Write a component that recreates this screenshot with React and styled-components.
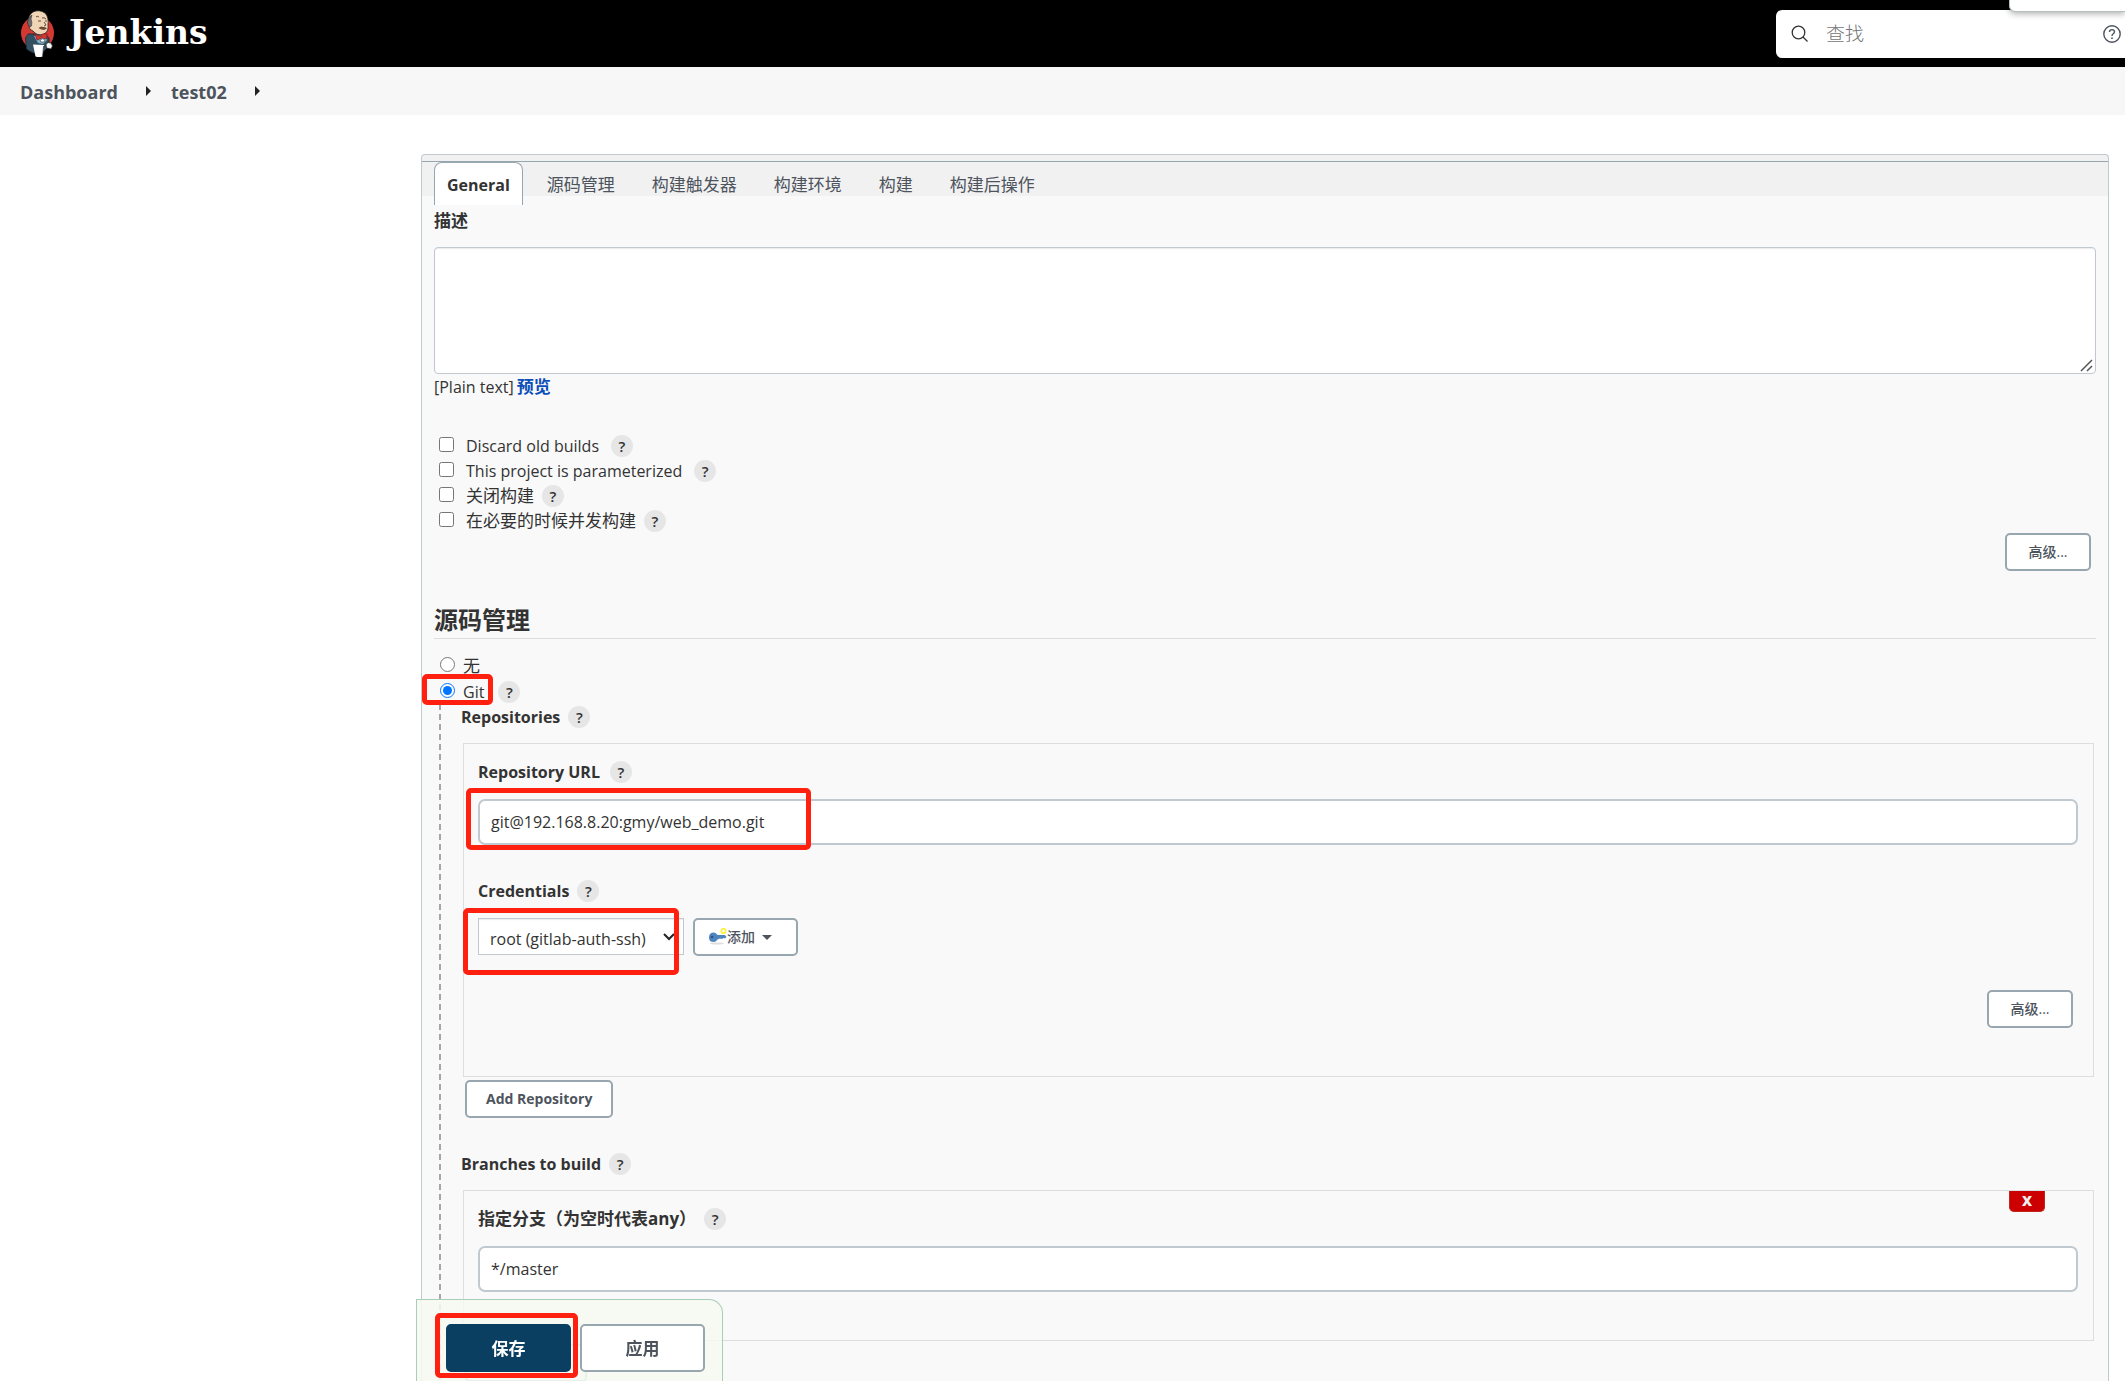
import React from "react";
import styled, { createGlobalStyle, css } from "styled-components";

const GlobalStyle = createGlobalStyle`
  *, *::before, *::after { box-sizing: border-box; }
  body {
    margin: 0;
    background: #fff;
    color: #333;
    font-family: "Open Sans", "Noto Sans CJK SC", sans-serif;
    font-size: 16px;
    line-height: 24px;
  }
  button, input, select, textarea { font: inherit; color: inherit; margin: 0; }
  a { color: inherit; text-decoration: none; }
`;

const Page = styled.div`
  display: flex;
  flex-direction: column;
  height: 100vh;
  overflow: hidden;
`;

const Header = styled.header`
  position: relative;
  display: flex;
  flex: none;
  align-items: center;
  justify-content: space-between;
  height: 67px;
  padding-left: 20px;
  background: #000;
`;

const Brand = styled.a`
  display: flex;
  align-items: center;
  gap: 15px;
  && { color: #fff; }
  font: bold 33px/38px "DejaVu Serif", serif;
  span { padding-bottom: 2px; }
  svg { flex: none; }
`;

const SearchBox = styled.label`
  display: flex;
  align-items: center;
  gap: 17px;
  width: 349px;
  height: 48px;
  padding: 0 4px 0 15px;
  border-radius: 6px 0 0 6px;
  background: #fff;
  color: #4d545d;
  svg { flex: none; }
`;

const SearchInput = styled.input`
  flex: 1;
  min-width: 0;
  padding: 0;
  border: 0;
  outline: 0;
  background: none;
  font-size: 19px;
  font-weight: 300;
  &::placeholder { color: #757575; opacity: 1; }
`;

const Popup = styled.div`
  position: absolute;
  top: 0;
  right: 0;
  width: 116px;
  height: 12px;
  border: 1px solid #b5bfbd;
  border-width: 0 0 1px 1px;
  border-radius: 0 0 0 6px;
  background: #fff;
  box-shadow: 0 2px 6px rgba(0, 0, 0, 0.3);
`;

const Breadcrumbs = styled.nav`
  display: flex;
  flex: none;
  align-items: center;
  height: 48px;
  padding: 1px 20px 0;
  background: #f7f7f7;
  color: #4d545d;
  font-size: 18px;
  font-weight: 700;
`;

const Crumb = styled.a`
  display: flex;
  align-items: center;
  &::after {
    content: "";
    margin: 0 20px 2px 28px;
    border: 5px solid transparent;
    border-left-color: #222;
    border-right: 0;
  }
`;

const Main = styled.main`
  display: flex;
  flex: 1;
  min-height: 0;
  padding: 39px 16px 0 421px;
`;

const Panel = styled.form`
  flex: 1;
  min-width: 0;
  padding-top: 6px;
  border: 1px solid #c0c9d0;
  border-bottom: 0;
  border-radius: 4px 4px 0 0;
  background: linear-gradient(#f1f1f1 41px, #f9f9f9 41px);
`;

const Tabs = styled.div`
  display: flex;
  align-items: flex-start;
  height: 35px;
  padding: 0 12px;
  border-top: 1px solid #98a6b0;
`;

const Tab = styled.button`
  flex: none;
  height: 43px;
  padding: 2px ${(p) => (p.$active ? 12 : 18)}px 0;
  border: 1px solid transparent;
  border-width: 1px 0 0;
  border-radius: 8px 8px 0 0;
  background: none;
  color: #4d545d;
  font-size: 17px;
  & + & { margin-left: 1px; }
  ${(p) =>
    p.$active &&
    css`
      margin-right: 5px;
      border-width: 1px 1px 0;
      border-color: #98a6b0;
      background: #fff;
      color: #333;
      font-size: 16px;
      font-weight: 700;
    `}
`;

const Body = styled.div`
  padding: 13px 12px 0;
`;

const Label = styled.label`
  display: block;
  font-weight: 700;
  font-size: ${(p) => (p.$cjk ? 17 : 16)}px;
`;

const DescriptionWrap = styled.div`
  position: relative;
  margin-top: 14px;
  svg {
    position: absolute;
    right: 3px;
    bottom: 2px;
    pointer-events: none;
  }
`;

const Description = styled.textarea`
  display: block;
  width: 100%;
  height: 127px;
  border: 1px solid #c0c9d0;
  border-radius: 4px;
  outline: 0;
  background: #fff;
  resize: none;
  box-shadow: inset 0 1px 1px rgba(0, 0, 0, 0.08);
`;

const Hint = styled.div`
  display: flex;
  align-items: center;
  gap: 3px;
  margin: 1px 0 34px;
  a {
    color: #0b4fb8;
    font-size: 17px;
    font-weight: 700;
  }
`;

const Option = styled.div`
  position: relative;
  display: flex;
  align-items: center;
  height: ${(p) => (p.$tall ? 26 : 25)}px;
  padding-left: ${(p) => (p.$tall ? 6 : 5)}px;
  input {
    flex: none;
    width: 15px;
    height: 15px;
    margin-bottom: ${(p) => (p.$tall ? 4 : 2)}px;
  }
  label {
    padding-left: ${(p) => (p.$tall ? 8 : 12)}px;
    font-size: ${(p) => (p.$cjk ? 17 : 16)}px;
    font-weight: ${(p) => p.$weight || 400};
  }
`;

const Help = styled.button`
  flex: none;
  width: 22px;
  height: 22px;
  margin-left: ${(p) => p.$gap || 8}px;
  padding: 0;
  border: 0;
  border-radius: 50%;
  background: #e6e6e6;
  font-size: 15px;
  font-weight: 600;
  line-height: 22px;
`;

const Actions = styled.div`
  display: flex;
  justify-content: flex-end;
  padding-right: 5px;
`;

const Button = styled.button`
  display: inline-flex;
  align-items: center;
  justify-content: center;
  min-width: 86px;
  height: 38px;
  padding: 0 19px;
  border: 2px solid #98a6b0;
  border-radius: 5px;
  background: #fff;
  color: #4d545d;
  font-size: 14px;
  font-weight: ${(p) => p.$weight || 700};
`;

const Heading = styled.h2`
  margin: 32px 0 14px;
  padding-bottom: 2px;
  border-bottom: 1px solid #dcdfe1;
  font-size: 24px;
  line-height: 33px;
  font-weight: 700;
`;

const Nested = styled.div`
  margin-left: 5px;
  padding: 0 2px 60px 22px;
  background: linear-gradient(#a6a6a6 50%, transparent 50%, transparent 90%, #a6a6a6 90%) 0 0 / 2px 10px repeat-y;
`;

const FieldLabel = styled.div`
  display: flex;
  align-items: center;
  height: 24px;
`;

const Box = styled.section`
  position: relative;
  margin: 14px 0 3px 2px;
  padding: 16px 15px 48px 14px;
  border: 1px solid #dcdfe1;
`;

const FieldRow = styled.div`
  position: relative;
  display: flex;
  align-items: flex-start;
  gap: 9px;
  margin: 15px 0 34px;
  &:last-child { margin-bottom: 0; }
`;

const TextInput = styled.input`
  width: 100%;
  height: 46px;
  padding: 0 11px;
  border: 2px solid #c0c9d0;
  border-radius: 7px;
  outline: 0;
  background: #fff;
`;

const SelectWrap = styled.div`
  position: relative;
  svg {
    position: absolute;
    right: 9px;
    top: 15px;
    pointer-events: none;
  }
`;

const Select = styled.select`
  width: 206px;
  height: 37px;
  padding: 4px 11px 0;
  border: 1px solid #c0c9d0;
  border-radius: 0;
  appearance: none;
  background: #fff;
  box-shadow: inset 0 1px 1px rgba(0, 0, 0, 0.08);
`;

const AddButton = styled(Button)`
  width: 105px;
  padding: 0 24px 0 14px;
  font-weight: 500;
  svg { flex: none; }
  &::after {
    content: "";
    margin-left: 7px;
    border: 5px solid transparent;
    border-top-color: #4d545d;
    border-bottom: 0;
  }
`;

const BranchButton = styled(Button)`
  width: 122px;
`;

const Group = styled.div`
  & + & { margin-top: 34px; }
`;

const AddRow = styled.div`
  padding-left: 4px;
  line-height: 0;
`;

const Delete = styled.button`
  position: absolute;
  top: 0;
  right: 48px;
  width: 36px;
  height: 21px;
  padding: 0;
  border: 1px solid #c0281e;
  border-top: 0;
  border-radius: 0 0 5px 5px;
  background: #c00;
  color: #eee;
  font-size: 14px;
  line-height: 20px;
  font-weight: 800;
`;

const Footer = styled.div`
  position: fixed;
  left: 416px;
  bottom: 0;
  display: flex;
  gap: 9px;
  height: 82px;
  padding: 24px 17px 0 29px;
  border: 1px solid #a9cdb9;
  border-bottom: 0;
  border-radius: 0 14px 0 0;
  background: rgba(245, 249, 240, 0.88);
`;

const FooterButton = styled(Button)`
  width: 125px;
  height: 48px;
  padding-top: 2px;
  font-size: 17px;
  ${(p) =>
    p.$primary &&
    css`
      border-color: #0b3f61;
      background: #0b3f61;
      color: #fff;
    `}
`;

/* Red call-out frame drawn over the control it surrounds. */
const Marker = styled.span`
  position: absolute;
  z-index: 1;
  top: ${(p) => p.$top}px;
  left: ${(p) => p.$left}px;
  width: ${(p) => p.$width}px;
  height: ${(p) => p.$height}px;
  border: 5px solid #ff2010;
  border-radius: 5px;
  pointer-events: none;
`;

function JenkinsLogo() {
  return (
    <svg width="34" height="48" viewBox="0 0 34 48" aria-hidden="true">
      <ellipse cx="17.500" cy="23" rx="16.500" ry="17" fill="#d33833" />
      <path d="M8 24 5.500 28 6.500 39Q14 45 22 43L29 36 29 28 25 24Z" fill="#335061" stroke="#1b2a33" strokeWidth=".8" />
      <path d="M14 26 18 33 23 34 27 30 25 25Z" fill="#81b0c4" />
      <path d="M8 13Q8 5 13 2Q19-1 25 3Q29 7 28 15Q29 22 23 24.500Q17 26 13 21Q9 20 9 16Z" fill="#f0d6b7" stroke="#231f20" strokeWidth=".8" />
      <path d="M7.500 12Q8 7 12 5L11 9Q12.500 12 11.500 16L10 17Q7.500 15 7.500 12Z" fill="#6d6b6d" stroke="#231f20" strokeWidth=".5" />
      <path d="M16 7Q17 5.500 19 7M22 8Q24 7 26 9M18 11h3M25 11h2M24 12l2 3-2 1" fill="none" stroke="#3d2b25" strokeWidth=".8" />
      <path d="M18.500 18Q21 15.500 23 17Q26 16.500 27 18.500L24 20Q20 19.500 18.500 18Z" fill="#6b4a35" />
      <path d="M15 24 21 26.500 22 24 27 24 26.500 29 22 28 17 30Z" fill="#d33833" stroke="#7d1513" strokeWidth=".6" />
      <path d="M20 30Q23 27.500 25 30L24 32 21 32Z" fill="#fff" stroke="#335061" strokeWidth=".7" />
      <path d="M13 34.500 24 35 22.500 46.500Q19 47.500 15.500 46.500Z" fill="#fff" />
      <path d="M26 34Q28 31.500 31 33L32.500 36 31 39 26.500 38Z" fill="#f5f5f5" stroke="#231f20" strokeWidth=".7" />
      <path d="M23.500 36l-.7 10" stroke="#231f20" strokeWidth=".7" />
    </svg>
  );
}

function KeyIcon() {
  return (
    <svg width="18" height="18" viewBox="0 0 18 18" aria-hidden="true">
      <ellipse cx="8" cy="15.500" rx="7" ry="1" fill="#dedede" />
      <path d="M0 9.500Q0 4.500 5 4.500Q7 4.500 8.500 7H16L17.500 9 16 10.500 14.500 10 13 11 11 10.500 8.500 11.500Q7 14 4.500 14Q0 14 0 9.500Z" fill="#4f84bd" />
      <circle cx="3" cy="9" r="1.300" fill="#275583" />
      <circle cx="14.500" cy="3" r="2.200" fill="#fff" stroke="#fcf146" strokeWidth="1.800" />
    </svg>
  );
}

function HelpButton({ gap }) {
  return (
    <Help type="button" $gap={gap}>
      ?
    </Help>
  );
}

const TABS = ["General", "源码管理", "构建触发器", "构建环境", "构建", "构建后操作"];

const OPTIONS = [
  { id: "discard", text: "Discard old builds", weight: 500, gap: 12 },
  { id: "params", text: "This project is parameterized", weight: 500, gap: 12 },
  { id: "disable", text: "关闭构建", cjk: true },
  { id: "concurrent", text: "在必要的时候并发构建", cjk: true },
];

export default function App() {
  return (
    <Page>
      <GlobalStyle />
      <Header>
        <Brand href="#">
          <JenkinsLogo />
          <span>Jenkins</span>
        </Brand>
        <SearchBox>
          <svg width="18" height="18" viewBox="0 0 18 18" fill="none" stroke="#333" strokeWidth="1.300">
            <circle cx="7.500" cy="7.500" r="6.300" />
            <path d="M12 12l4.500 4.500" />
          </svg>
          <SearchInput type="text" placeholder="查找" />
          <svg width="18" height="18" viewBox="0 0 18 18" fill="none" stroke="#4d545d" strokeWidth="1.400">
            <circle cx="9" cy="9" r="8.200" />
            <path d="M6.500 7Q6.500 4.600 9 4.600Q11.500 4.600 11.500 6.800Q11.500 8 10 9Q9 9.700 9 11" />
            <circle cx="9" cy="13.200" r=".9" fill="#4d545d" stroke="none" />
          </svg>
        </SearchBox>
        <Popup />
      </Header>

      <Breadcrumbs>
        <Crumb href="#">Dashboard</Crumb>
        <Crumb href="#">test02</Crumb>
      </Breadcrumbs>

      <Main>
        <Panel onSubmit={(e) => e.preventDefault()}>
          <Tabs>
            {TABS.map((name, i) => (
              <Tab key={name} type="button" $active={i === 0}>
                {name}
              </Tab>
            ))}
          </Tabs>

          <Body>
            <Label htmlFor="description" $cjk>
              描述
            </Label>
            <DescriptionWrap>
              <Description id="description" />
              <svg width="13" height="13" viewBox="0 0 13 13" stroke="#555" strokeWidth="1.500">
                <path d="M1 12 12 1M7 12 12 7" />
              </svg>
            </DescriptionWrap>
            <Hint>
              [Plain text] <a href="#">预览</a>
            </Hint>

            {OPTIONS.map((o) => (
              <Option key={o.id} $cjk={o.cjk} $weight={o.weight}>
                <input type="checkbox" id={o.id} />
                <label htmlFor={o.id}>{o.text}</label>
                <HelpButton gap={o.gap} />
              </Option>
            ))}
            <Actions>
              <Button type="button" $weight={500}>
                高级...
              </Button>
            </Actions>

            <Heading>源码管理</Heading>

            <Option $tall $cjk>
              <input type="radio" name="scm" id="scm-none" />
              <label htmlFor="scm-none">无</label>
            </Option>
            <Option $tall>
              <input type="radio" name="scm" id="scm-git" defaultChecked />
              <label htmlFor="scm-git">Git</label>
              <HelpButton gap={14} />
              <Marker $top={-5} $left={-12} $width={71} $height={31} />
            </Option>

            <Nested>
              <Group>
                <FieldLabel>
                  <Label as="span">Repositories</Label>
                  <HelpButton />
                </FieldLabel>
                <Box>
                  <FieldLabel>
                    <Label htmlFor="url">Repository URL</Label>
                    <HelpButton gap={10} />
                  </FieldLabel>
                  <FieldRow>
                    <TextInput id="url" type="text" defaultValue="git@192.168.8.20:gmy/web_demo.git" />
                    <Marker $top={-11} $left={-12} $width={345} $height={62} />
                  </FieldRow>
                  <FieldLabel>
                    <Label htmlFor="credentials">Credentials</Label>
                    <HelpButton />
                  </FieldLabel>
                  <FieldRow>
                    <SelectWrap>
                      <Select id="credentials">
                        <option>root (gitlab-auth-ssh)</option>
                      </Select>
                      <svg width="12" height="8" viewBox="0 0 12 8" fill="none" stroke="#222" strokeWidth="2">
                        <path d="M1 1l5 5 5-5" />
                      </svg>
                    </SelectWrap>
                    <AddButton type="button">
                      <KeyIcon />
                      添加
                    </AddButton>
                    <Marker $top={-10} $left={-15} $width={216} $height={67} />
                  </FieldRow>
                  <Actions>
                    <Button type="button" $weight={500}>
                      高级...
                    </Button>
                  </Actions>
                </Box>
                <AddRow>
                  <Button type="button">Add Repository</Button>
                </AddRow>
              </Group>

              <Group>
                <FieldLabel>
                  <Label as="span">Branches to build</Label>
                  <HelpButton />
                </FieldLabel>
                <Box>
                  <Delete type="button">X</Delete>
                  <FieldLabel>
                    <Label htmlFor="branch" $cjk>
                      指定分支（为空时代表any）
                    </Label>
                    <HelpButton />
                  </FieldLabel>
                  <FieldRow>
                    <TextInput id="branch" type="text" defaultValue="*/master" />
                  </FieldRow>
                </Box>
                <AddRow>
                  <BranchButton type="button" />
                </AddRow>
              </Group>
            </Nested>
          </Body>
        </Panel>
      </Main>

      <Footer>
        <FooterButton type="submit" $primary>
          保存
        </FooterButton>
        <FooterButton type="button">应用</FooterButton>
        <Marker $top={13} $left={18} $width={143} $height={65} />
      </Footer>
    </Page>
  );
}
